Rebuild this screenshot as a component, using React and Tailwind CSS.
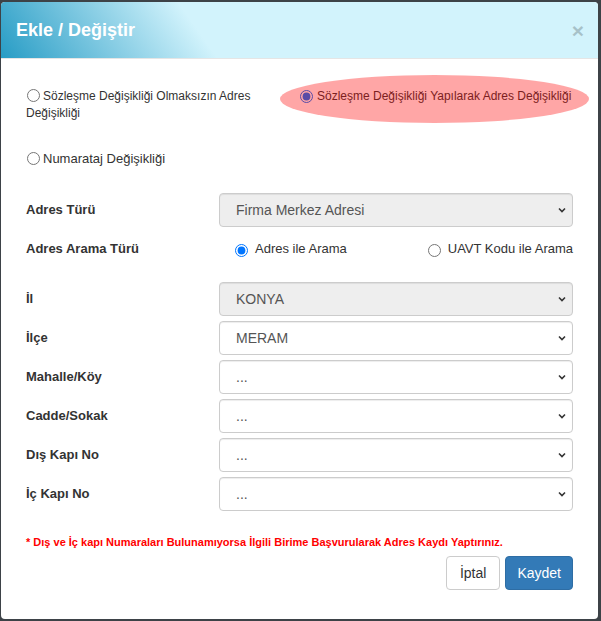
import React from 'react';

const Chevron = () => (
  <svg width="8" height="6" viewBox="0 0 8 6" className="shrink-0">
    <polyline points="1,1.5 4,4.5 7,1.5" fill="none" stroke="#333" strokeWidth="1.6" />
  </svg>
);

const SelectBox = ({ value, disabled }) => (
  <div
    className={`h-[34px] border border-[#ccc] rounded-[4px] shadow-[inset_0_1px_1px_rgba(0,0,0,0.075)] pl-[16px] pr-[6px] flex items-center justify-between text-[14px] text-[#555] ${
      disabled ? 'bg-[#eeeeee]' : 'bg-white'
    }`}
  >
    <span>{value}</span>
    <Chevron />
  </div>
);

const Row = ({ label, value, disabled, className = '' }) => (
  <div className={`grid grid-cols-[193px_1fr] items-center ${className}`}>
    <div className="text-[13px] font-bold text-[#333]">{label}</div>
    <SelectBox value={value} disabled={disabled} />
  </div>
);

export default function App() {
  return (
    <div className="w-[601px] h-[621px] bg-[#3d4247] pt-[2px] pl-[1px]">
      <div className="relative w-[597px] h-[617px] bg-white rounded-[4px] overflow-hidden font-['Liberation_Sans',Arial,sans-serif] text-[#333]">
        {/* başlık */}
        <div className="h-[57px] border-b border-[#e5e5e5] bg-[linear-gradient(55deg,#279cc5_0%,#d2f3fc_34%,#d2f3fc_100%)] flex items-center justify-between pl-[15px] pr-[14px]">
          <h4 className="text-[18px] font-bold text-white leading-none">Ekle / Değiştir</h4>
          <span className="text-[21px] font-bold leading-none text-black opacity-20">×</span>
        </div>

        <div className="pl-[25px] pr-[25px] pt-[29px]">
          {/* değişiklik türü */}
          <div className="grid grid-cols-[274px_1fr] text-[12px] leading-[17px]">
            <label className="pr-[14px]">
              <input type="radio" name="tur" className="align-[-2px] mr-[3px] ml-[1px]" readOnly />
              Sözleşme Değişikliği Olmaksızın Adres Değişikliği
            </label>
            <label className="flex items-start">
              <input type="radio" name="tur" defaultChecked className="mt-[2px] mr-[4px]" />
              <span className="whitespace-nowrap">Sözleşme Değişikliği Yapılarak Adres Değişikliği</span>
            </label>
          </div>

          <label className="mt-[28px] flex items-center text-[13px] leading-[17px]">
            <input type="radio" name="tur" className="mr-[3px] ml-[1px]" readOnly />
            <span>Numarataj Değişikliği</span>
          </label>

          <Row className="mt-[26px]" label="Adres Türü" value="Firma Merkez Adresi" disabled />

          <div className="grid grid-cols-[193px_1fr] items-center mt-[5px] h-[34px]">
            <div className="text-[13px] font-bold">Adres Arama Türü</div>
            <div className="flex items-center justify-between pl-[16px] text-[13px]">
              <label className="flex items-center">
                <input type="radio" name="arama" defaultChecked className="mt-[3px] mr-[7px]" />
                <span>Adres ile Arama</span>
              </label>
              <label className="flex items-center">
                <input type="radio" name="arama" className="mt-[3px] mr-[7px]" readOnly />
                <span>UAVT Kodu ile Arama</span>
              </label>
            </div>
          </div>

          <Row className="mt-[16px]" label="İl" value="KONYA" disabled />
          <Row className="mt-[5px]" label="İlçe" value="MERAM" />
          <Row className="mt-[5px]" label="Mahalle/Köy" value="..." />
          <Row className="mt-[5px]" label="Cadde/Sokak" value="..." />
          <Row className="mt-[5px]" label="Dış Kapı No" value="..." />
          <Row className="mt-[5px]" label="İç Kapı No" value="..." />

          <p className="mt-[24px] text-[11px] leading-[15px] font-bold text-[#ff0000]">
            * Dış ve İç kapı Numaraları Bulunamıyorsa İlgili Birime Başvurularak Adres Kaydı Yaptırınız.
          </p>

          <div className="mt-[6px] flex justify-end gap-[5px]">
            <button className="h-[34px] px-[13px] border border-[#ccc] rounded-[4px] bg-white text-[14px] text-[#333]">
              İptal
            </button>
            <button className="h-[34px] px-[11px] border border-[#2e6da4] rounded-[4px] bg-[#337ab7] text-[14px] text-white">
              Kaydet
            </button>
          </div>
        </div>

        {/* işaretleme */}
        <div className="absolute left-[279px] top-[73px] w-[309px] h-[48px] rounded-[50%] bg-[rgba(255,0,0,0.35)] pointer-events-none" />
      </div>
    </div>
  );
}
